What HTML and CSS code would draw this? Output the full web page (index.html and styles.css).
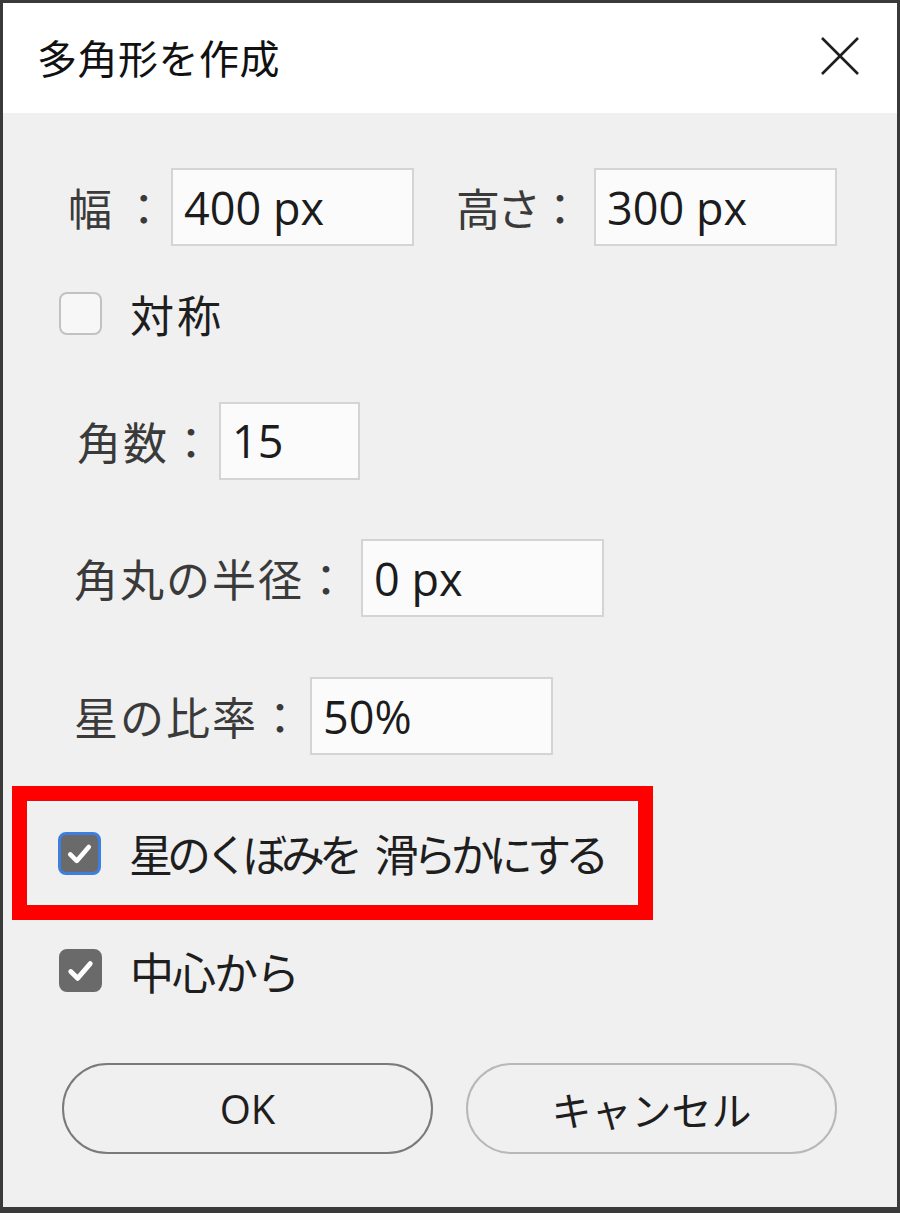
FILE: index.html
```html
<!DOCTYPE html>
<html lang="ja">
<head>
  <meta charset="UTF-8">
  <title>多角形を作成</title>
  <link rel="stylesheet" href="styles.css">
</head>
<body>
  <div class="dialog">
    <div class="titlebar">
      <span class="title">多角形を作成</span>
      <svg class="close" width="40" height="40" viewBox="0 0 40 40">
        <path d="M2 2 L38 38 M38 2 L2 38" stroke="#1e1e1e" stroke-width="2.6" fill="none"/>
      </svg>
    </div>

    <div class="content">
      <div class="row size-row">
        <label class="label">幅 ：</label>
        <div class="field w-wide">400 px</div>
        <label class="label height-label">高さ：</label>
        <div class="field w-wide">300 px</div>
      </div>

      <div class="row check-row symmetric">
        <span class="box"></span>
        <span class="check-text">対称</span>
      </div>

      <div class="row corners">
        <label class="label">角数：</label>
        <div class="field w-small">15</div>
      </div>

      <div class="row radius">
        <label class="label">角丸の半径：</label>
        <div class="field w-wide">0 px</div>
      </div>

      <div class="row ratio">
        <label class="label">星の比率：</label>
        <div class="field w-wide">50%</div>
      </div>

      <div class="highlight">
        <div class="highlight-inner">
          <span class="box checked focused">
            <svg width="100%" height="100%" viewBox="0 0 40 40"><polyline points="10,21 17,28 30,13" stroke="#fff" stroke-width="5" fill="none" stroke-linecap="round" stroke-linejoin="round"/></svg>
          </span>
          <span class="check-text smooth">星のくぼみを 滑らかにする</span>
        </div>
      </div>

      <div class="row check-row center">
        <span class="box checked">
          <svg width="100%" height="100%" viewBox="0 0 40 40"><polyline points="10,21 17,28 30,13" stroke="#fff" stroke-width="5" fill="none" stroke-linecap="round" stroke-linejoin="round"/></svg>
        </span>
        <span class="check-text kana">中心から</span>
      </div>

      <div class="buttons">
        <button class="btn ok">OK</button>
        <button class="btn cancel">キャンセル</button>
      </div>
    </div>
  </div>
</body>
</html>
```

FILE: styles.css
```css
* {
  margin: 0;
  padding: 0;
  box-sizing: border-box;
}

body {
  width: 900px;
  height: 1213px;
  background: #f0f0f0;
  font-family: "Noto Sans CJK JP", "Noto Sans", sans-serif;
  color: #262626;
}

.dialog {
  width: 900px;
  height: 1213px;
  border: 3px solid #3a3a3a;
  border-bottom-width: 6px;
  background: #f0f0f0;
  display: flex;
  flex-direction: column;
}

.titlebar {
  height: 110px;
  flex-shrink: 0;
  background: #fff;
  display: flex;
  align-items: center;
  justify-content: space-between;
  padding: 0 37px 0 34px;
}

.title {
  font-size: 40px;
  color: #111;
  letter-spacing: 0.5px;
  margin-top: -2px;
}

.close {
  margin-top: -4px;
}

.content {
  display: flex;
  flex-direction: column;
}

.row {
  display: flex;
  align-items: center;
  flex-shrink: 0;
}

.label {
  font-size: 44px;
  line-height: 1;
  letter-spacing: 2px;
  color: #3a3a3a;
  white-space: nowrap;
  flex-shrink: 0;
}

.field {
  height: 78px;
  flex-shrink: 0;
  background: #fbfbfb;
  border: 2px solid #d4d4d4;
  display: flex;
  align-items: center;
  padding-left: 11px;
  font-family: "Open Sans", "Noto Sans", sans-serif;
  font-size: 45px;
  color: #1c1c1c;
}

.w-wide {
  width: 243px;
}

.w-small {
  width: 141px;
}

.size-row {
  height: 78px;
  margin-top: 55px;
  padding-left: 65px;
}

.size-row .label {
  width: 103px;
  letter-spacing: 0;
}

.size-row .height-label {
  margin-left: 42px;
  width: 138px;
  letter-spacing: -3px;
}

.check-row {
  height: 43px;
  padding-left: 56px;
}

.symmetric {
  margin-top: 46px;
}

.box {
  width: 43px;
  height: 43px;
  border-radius: 8px;
  border: 2px solid #c2c2c2;
  background: #f7f7f7;
  flex-shrink: 0;
  display: flex;
}

.box.checked {
  background: #6a6a6a;
  border-color: #6a6a6a;
}

.box.focused {
  border: 3px solid #3d7fe0;
}

.check-text {
  font-size: 44px;
  line-height: 1;
  letter-spacing: 3px;
  color: #1e1e1e;
  margin-left: 28px;
  white-space: pre;
}

.check-text.kana {
  letter-spacing: -2px;
}

.corners {
  height: 77px;
  margin-top: 67px;
  padding-left: 74px;
}

.corners .label {
  width: 142px;
}

.radius {
  height: 78px;
  margin-top: 60px;
  padding-left: 71px;
}

.radius .label {
  width: 287px;
}

.ratio {
  height: 78px;
  margin-top: 60px;
  padding-left: 71px;
}

.ratio .label {
  width: 236px;
}

.highlight {
  flex-shrink: 0;
  margin-top: 31px;
  margin-left: 9px;
  width: 641px;
  height: 134px;
  border: 15px solid #ff0000;
}

.highlight-inner {
  height: 100%;
  border: 2px solid #eaf6f8;
  display: flex;
  align-items: center;
  padding-left: 29px;
}

.check-text.smooth {
  margin-left: 28px;
  letter-spacing: -6px;
  word-spacing: 14px;
}

.center {
  margin-top: 29px;
}

.buttons {
  margin-top: 71px;
  padding-left: 59px;
  display: flex;
  gap: 33px;
}

.btn {
  width: 371px;
  height: 91px;
  border-radius: 46px;
  background: #f0f0f0;
  font-family: "Noto Sans CJK JP", "Noto Sans", sans-serif;
  font-size: 40px;
  color: #1e1e1e;
}

.btn.ok {
  border: 2px solid #7a7a7a;
  font-family: "Open Sans", "Noto Sans", sans-serif;
}

.btn.cancel {
  border: 2px solid #b8b8b8;
}
```
